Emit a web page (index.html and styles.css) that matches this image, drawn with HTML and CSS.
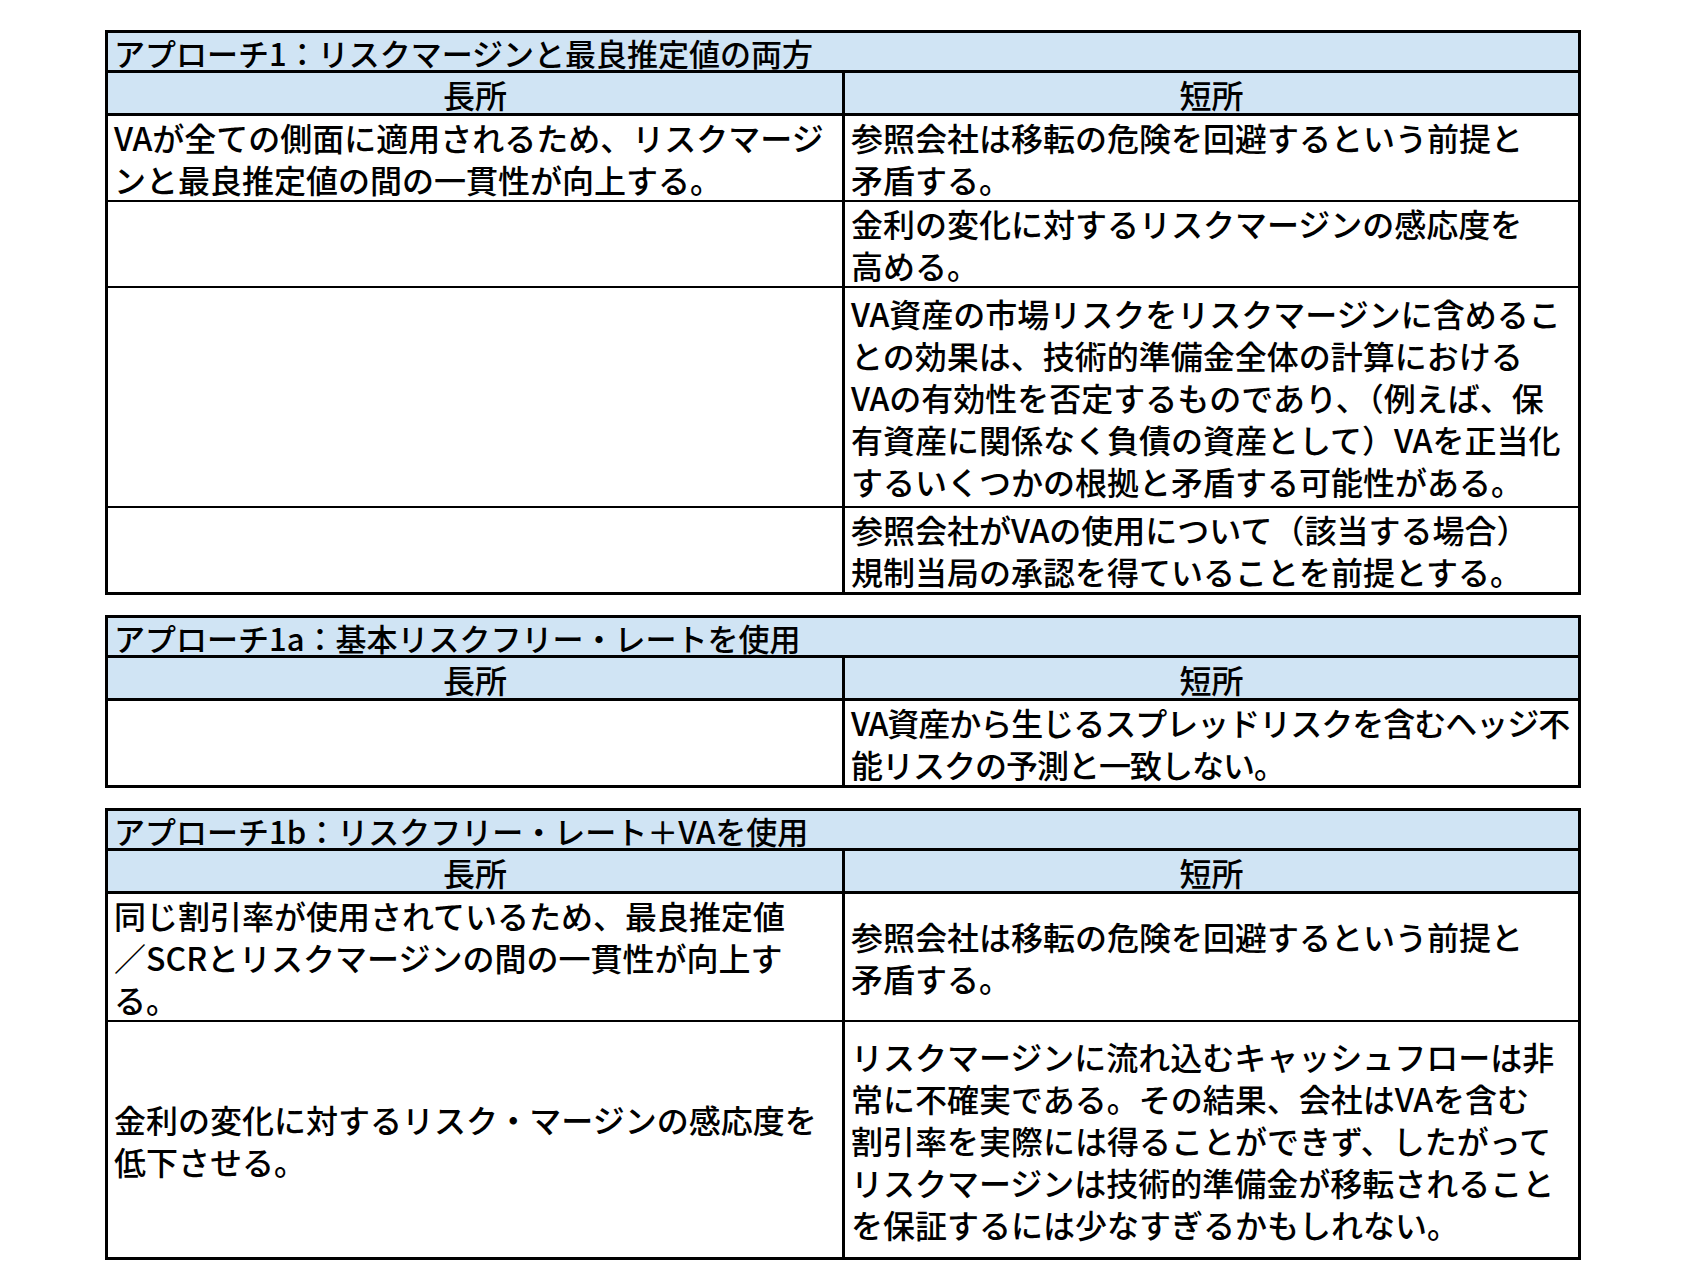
FILE: index.html
```html
<!DOCTYPE html>
<html lang="ja">
<head>
<meta charset="utf-8">
<title>アプローチ比較</title>
<link rel="stylesheet" href="styles.css">
</head>
<body>
<main class="page">

  <section class="sheet">
    <div class="title">アプローチ1：リスクマージンと最良推定値の両方</div>
    <div class="row head">
      <div class="cell">長所</div>
      <div class="cell">短所</div>
    </div>
    <div class="row">
      <div class="cell">VAが全ての側面に適用されるため、リスクマージ<br>ンと最良推定値の間の一貫性が向上する。</div>
      <div class="cell">参照会社は移転の危険を回避するという前提と<br>矛盾する。</div>
    </div>
    <div class="row">
      <div class="cell"></div>
      <div class="cell">金利の変化に対するリスクマージンの感応度を<br>高める。</div>
    </div>
    <div class="row five">
      <div class="cell"></div>
      <div class="cell">VA資産の市場リスクをリスクマージンに含めるこ<br>との効果は、技術的準備金全体の計算における<br>VAの有効性を否定するものであり、（例えば、保<br>有資産に関係なく負債の資産として）VAを正当化<br>するいくつかの根拠と矛盾する可能性がある。</div>
    </div>
    <div class="row">
      <div class="cell"></div>
      <div class="cell">参照会社がVAの使用について（該当する場合）<br>規制当局の承認を得ていることを前提とする。</div>
    </div>
  </section>

  <section class="sheet">
    <div class="title">アプローチ1a：基本リスクフリー・レートを使用</div>
    <div class="row head">
      <div class="cell">長所</div>
      <div class="cell">短所</div>
    </div>
    <div class="row">
      <div class="cell"></div>
      <div class="cell tight">VA資産から生じるスプレッドリスクを含むヘッジ不<br>能リスクの予測と一致しない。</div>
    </div>
  </section>

  <section class="sheet">
    <div class="title">アプローチ1b：リスクフリー・レート＋VAを使用</div>
    <div class="row head">
      <div class="cell">長所</div>
      <div class="cell">短所</div>
    </div>
    <div class="row">
      <div class="cell">同じ割引率が使用されているため、最良推定値<br>／SCRとリスクマージンの間の一貫性が向上す<br>る。</div>
      <div class="cell">参照会社は移転の危険を回避するという前提と<br>矛盾する。</div>
    </div>
    <div class="row tall">
      <div class="cell">金利の変化に対するリスク・マージンの感応度を<br>低下させる。</div>
      <div class="cell">リスクマージンに流れ込むキャッシュフローは非<br>常に不確実である。その結果、会社はVAを含む<br>割引率を実際には得ることができず、したがって<br>リスクマージンは技術的準備金が移転されること<br>を保証するには少なすぎるかもしれない。</div>
    </div>
  </section>

</main>
</body>
</html>
```

FILE: styles.css
```css
html, body {
  margin: 0;
  padding: 0;
  background: #ffffff;
}

body {
  font-family: "Noto Sans CJK JP", "Noto Sans", sans-serif;
  font-size: 32px;
  font-weight: 500;
  color: #000000;
}

.page {
  display: flex;
  flex-direction: column;
  gap: 20px;
  padding: 30px 0 0 105px;
}

.sheet {
  width: 1476px;
  box-sizing: border-box;
  border: 3px solid #000000;
  display: flex;
  flex-direction: column;
}

.title {
  background: #d0e4f4;
  height: 35px;
  padding: 2px 0 0 6px;
  font-size: 31px;
  line-height: 35px;
  white-space: nowrap;
  border-bottom: 3px solid #000000;
}

.row {
  display: grid;
  grid-template-columns: 737px 1fr;
  border-top: 2px solid #000000;
}

.row.head {
  border-top: none;
  background: #d0e4f4;
  height: 40px;
  border-bottom: 1px solid #000000;
}

.cell {
  padding: 0 4px 0 6px;
  line-height: 42px;
  white-space: nowrap;
  display: flex;
  flex-direction: column;
  justify-content: center;
}

.cell.tight {
  letter-spacing: -1px;
}

.row .cell:first-child {
  border-right: 3px solid #000000;
}

.row.head .cell {
  display: block;
  text-align: center;
  padding: 2px 0 0;
  line-height: 38px;
}

.row.five .cell {
  padding-top: 4px;
  padding-bottom: 4px;
}

.row.tall {
  min-height: 235px;
}
```
